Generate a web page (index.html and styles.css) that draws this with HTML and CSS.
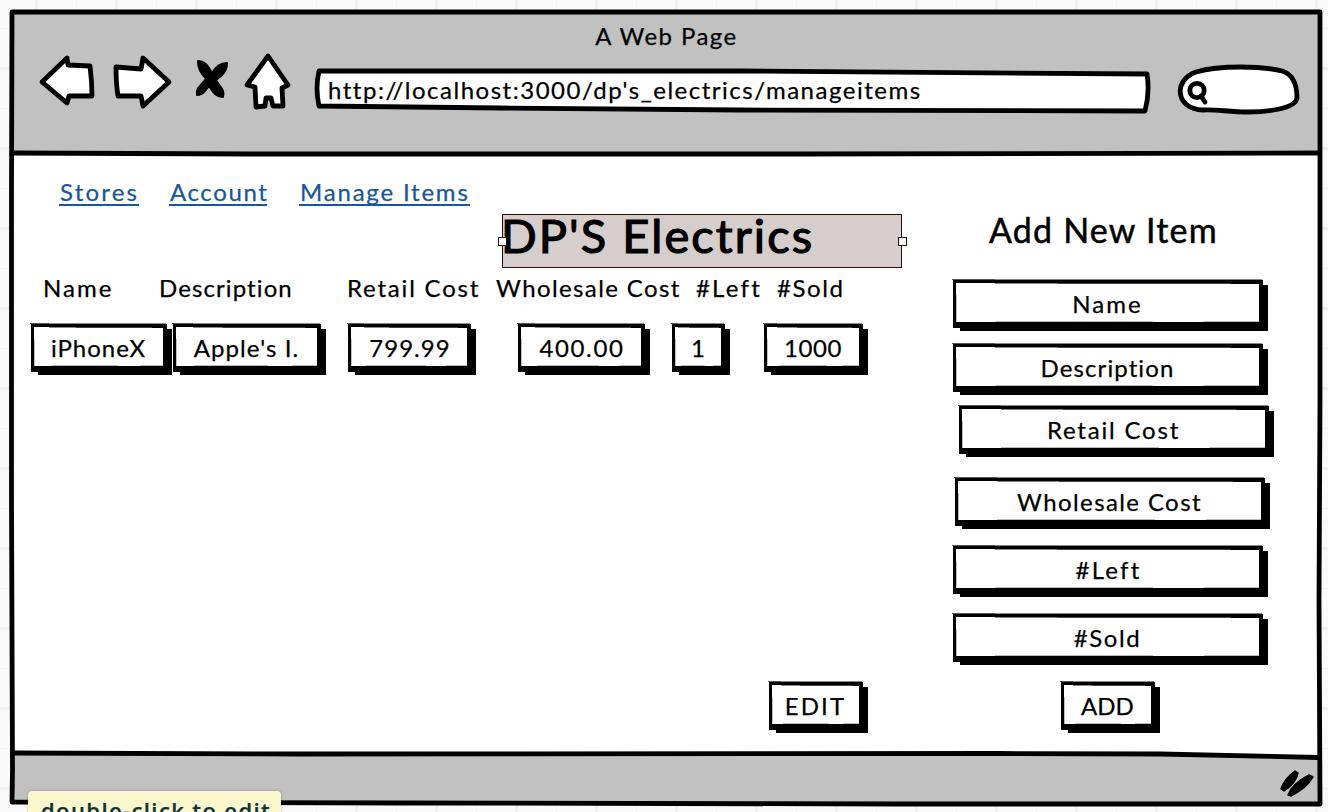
FILE: index.html
```html
<!DOCTYPE html>
<html lang="en">
<head>
<meta charset="utf-8">
<title>A Web Page</title>
<link rel="stylesheet" href="styles.css">
</head>
<body>
<div class="window">
  <header class="chrome">
    <div class="chrome-title"><span class="t-page">A Web Page</span></div>
    <div class="toolbar">
      <svg class="ico back" width="64" height="64" viewBox="36 52 64 64"><path d="M42 82 L67 58 L68 65 L90 66 Q92 82 92 96 L69 96 L67 103 Z"/></svg>
      <svg class="ico forward" width="68" height="64" viewBox="108 52 68 64"><path d="M116 67 L141 69 L143 58 L169 82 L143 106 L141 96 L118 96 Q116 84 116 67 Z"/></svg>
      <svg class="ico stop" width="44" height="64" viewBox="190 52 44 64"><path class="solid" d="M198 61 Q205 61 209 68 L212 73 Q218 63 227 63 Q227 70 222 75 L216 80 L220 86 Q225 92 223 97 Q217 97 213 92 L209 86 L205 91 Q202 95 197 95 Q196 90 200 86 L206 79 L202 74 Q198 68 198 61 Z"/></svg>
      <svg class="ico home" width="52" height="64" viewBox="242 52 52 64"><path d="M268 56 L288 85 L282 88 L283 106 L273 106 L271 98 L266 98 L265 106 L256 107 L255 87 L247 85 Z"/></svg>
      <div class="url">
        <svg class="ico" width="840" height="64" viewBox="312 52 840 64"><path d="M319 71 L740 71 L1147 74 Q1150 92 1145 111 L740 110 L500 108 L319 106 Q315 88 319 71 Z"/></svg>
        <span class="t-url">http://localhost:3000/dp's_electrics/manageitems</span>
      </div>
      <svg class="ico search" width="126" height="64" viewBox="1176 52 126 64"><path d="M1203 110 C1175 109 1173 80 1196 72 C1220 65 1262 66 1282 71 C1296 75 1297 90 1297 98 C1296 108 1270 112 1248 112 C1230 112 1214 109 1203 110 Z"/><circle cx="1197" cy="90.500" r="7.200"/><path d="M1201 96 L1205 102"/></svg>
    </div>
  </header>

  <main class="page">
    <section class="items">
      <nav class="nav">
        <a class="n1">Stores</a><a class="n2">Account</a><a class="n3">Manage Items</a>
      </nav>
      <h1 class="brand"><span>DP'S Electrics</span><i class="handle left"></i><i class="handle right"></i></h1>
      <div class="heads">
        <span class="h1c t-name">Name</span><span class="h2c t-desc">Description</span><span class="h3c t-retail">Retail Cost</span><span class="h4c t-whole">Wholesale Cost</span><span class="h5c t-left">#Left</span><span class="h6c t-sold">#Sold</span>
      </div>
      <div class="cells">
        <div class="box c1"><span class="t-iphone">iPhoneX</span></div>
        <div class="box c2"><span class="t-apple">Apple's I.</span></div>
        <div class="box c3"><span class="t-799">799.99</span></div>
        <div class="box c4"><span class="t-400">400.00</span></div>
        <div class="box c5"><span>1</span></div>
        <div class="box c6"><span class="t-1000">1000</span></div>
      </div>
      <div class="box edit"><span class="t-edit">EDIT</span></div>
    </section>
    <section class="form">
      <h2 class="form-title">Add New Item</h2>
      <div class="box f f1"><span class="t-name">Name</span></div>
      <div class="box f f2"><span class="t-desc">Description</span></div>
      <div class="box f f3"><span class="t-retail">Retail Cost</span></div>
      <div class="box f f4"><span class="t-whole">Wholesale Cost</span></div>
      <div class="box f f5"><span class="t-left">#Left</span></div>
      <div class="box f f6"><span class="t-sold">#Sold</span></div>
      <div class="box add"><span class="t-add">ADD</span></div>
    </section>
  </main>
  <footer class="status"></footer>
</div>

<svg class="frame" width="1328" height="812" viewBox="0 0 1328 812">
  <path class="notch" d="M1040 752 L1318 752 L1318 757 L1160 754 Z"/>
  <path class="line" d="M12 12 L1320 12 L1320 400 L1319 600 L1320 804 L900 804 L400 803 L12 802 L12.500 770 L11.500 500 L11.500 190 Z"/>
  <path class="line" d="M13 153 L250 154 L800 154 L1319 153"/>
  <path class="line" d="M13 753 L300 754 L1000 753.500 L1160 754 L1319 757.500"/>
  <path class="grip" d="M1281 789 Q1284 779 1295 771 L1298 773 Q1296 783 1284 791 Z M1288 795 Q1292 784 1309 775 L1313 777 Q1307 788 1291 796 Z"/>
</svg>
<div class="tooltip"><span>double-click to edit</span></div>
</body>
</html>
```
FILE: styles.css
```css
* { box-sizing: border-box; }
body {
  margin: 0;
  width: 1328px;
  height: 812px;
  overflow: hidden;
  position: relative;
  font-family: Lato, sans-serif;
  font-size: 24px;
  font-variant-ligatures: none;
  -webkit-text-stroke: .25px currentColor;
  line-height: 30px;
  color: #000;
  background-color: #fafafa;
  background-image:
    linear-gradient(90deg, #f0f0f0 3px, transparent 3px),
    linear-gradient(#f0f0f0 3px, transparent 3px),
    linear-gradient(90deg, #f3f3f3 1px, transparent 1px),
    linear-gradient(#f3f3f3 1px, transparent 1px);
  background-size: 80px 80px;
  background-position: 35px 0, 0 67px, 76px 0, 0 28px;
}
span, a, h2 { white-space: nowrap; }

.t-page { letter-spacing: 1.45px; }
.t-url { letter-spacing: 1.51px; }
.t-name { letter-spacing: 2px; }
.t-desc { letter-spacing: 1.1px; }
.t-retail { letter-spacing: 1.8px; }
.t-whole { letter-spacing: 1.4px; }
.t-left { letter-spacing: 2.2px; }
.t-sold { letter-spacing: 1.6px; }
.t-iphone, .t-799 { letter-spacing: 1px; }
.t-apple { letter-spacing: 1.1px; }
.t-400 { letter-spacing: 1.6px; }
.t-1000 { letter-spacing: .6px; }
.t-edit { letter-spacing: 2.1px; }
.t-799, .t-400, .t-left { margin-left: 2px; }

.window {
  display: grid;
  grid-template-rows: 142px 600px 50px;
  width: 1308px;
  padding-top: 12px;
  margin-left: 12px;
}
.chrome, .status { background: #c1c1c1; }
.chrome-title { height: 40px; padding: 9px 0 0 1px; text-align: center; }
.toolbar { display: flex; padding-left: 24px; }
.ico { display: block; flex: none; fill: #fff; stroke: #000; stroke-width: 4.8; stroke-linejoin: round; stroke-linecap: round; }
.ico .solid { fill: #000; stroke: #000; stroke-width: 2; }
.forward { margin-left: 8px; }
.stop { margin-left: 14px; }
.home { margin-left: 8px; }
.url { display: grid; margin-left: 18px; }
.url > * { grid-area: 1 / 1; }
.url span { padding: 23px 0 0 16px; }
.search { margin-left: 24px; }
.search circle { fill: none; }

.page { display: flex; background: #fff; }
.items { width: 938px; }
.nav { display: flex; height: 60px; padding: 24px 0 0 47px; color: #18579b; }
.nav a { height: 28px; line-height: 28px; border-bottom: 2px solid #18579b; padding-left: 1px; }
.n1 { width: 80px; letter-spacing: 2.2px; }
.n2 { width: 98px; margin-left: 30px; letter-spacing: 1.6px; }
.n3 { width: 171px; margin-left: 32px; letter-spacing: 1.8px; }
.brand {
  position: relative;
  width: 400px;
  height: 54px;
  margin: 0 0 0 490px;
  border: 1px solid #2e0f08;
  background: #d6cecc;
  font-size: 47px;
  font-weight: 400;
  line-height: 41px;
  letter-spacing: 2.05px;
  text-indent: -2px;
  -webkit-text-stroke: 1.2px #000;
}
.handle { position: absolute; top: 22px; width: 9px; height: 9px; background: #fff; border: 1px solid #2e0f08; }
.handle.left { left: -5px; }
.handle.right { right: -6px; }
.heads { display: flex; height: 56px; padding: 5px 0 0 31px; }
.heads span { flex: none; margin-left: 0; }
.h1c { width: 116px; }
.h2c { width: 188px; }
.h3c { width: 149px; }
.h4c { width: 200px; }
.h5c { width: 81px; }
.cells { display: flex; padding-left: 19px; }
.box {
  position: relative;
  flex: none;
  height: 48px;
  border: solid #000;
  border-width: 3px 4px 6px 3px;
  background: #fff;
  box-shadow: 6px 4px 0 -1px #000;
  text-align: center;
  line-height: 42px;
}
.box::before {
  content: "";
  position: absolute;
  left: -4px;
  right: -3px;
  top: -4px;
  height: 5px;
  background:
    linear-gradient(90deg, #555 14%, #888 14%) 0 0 / 100% 1px no-repeat,
    linear-gradient(90deg, transparent 14%, #888 14% 34%, #444 34% 90%, #000 90%) 0 100% / 100% 1px no-repeat;
}
.box::after {
  content: "";
  position: absolute;
  inset: 12px 0 0 0;
  background:
    linear-gradient(#c1c1c1, #c1c1c1) 0 0 / 1px 100% no-repeat,
    linear-gradient(90deg, transparent 13%, #bbb 13% 65%, transparent 65% 82%, #bbb 82%) 0 100% / 100% 1px no-repeat;
}
.c1 { width: 136px; }
.c2 { width: 148px; margin-left: 6px; }
.c3 { width: 123px; margin-left: 27px; }
.c4 { width: 127px; margin-left: 47px; }
.c5 { width: 53px; margin-left: 27px; }
.c6 { width: 99px; margin-left: 39px; }
.edit { width: 94px; margin: 310px 0 0 757px; }

.form { padding-top: 56px; }
.form-title { height: 70px; margin: 0 0 0 39px; font-size: 34px; font-weight: 400; line-height: 40px; letter-spacing: 1.2px; -webkit-text-stroke: .5px #000; }
.f { width: 310px; margin-left: 3px; }
.f2 { margin-top: 16px; }
.f3 { margin: 14px 0 0 9px; }
.f4 { margin: 24px 0 0 5px; }
.f5, .f6 { margin-top: 20px; }
.add { width: 94px; margin: 20px 0 0 111px; }

.frame { position: absolute; left: 0; top: 0; }
.frame .line { fill: none; stroke: #000; stroke-width: 4.8; stroke-linejoin: round; }
.frame .notch { fill: #fff; }
.frame .grip { stroke: #000; stroke-width: 1.5; stroke-linejoin: round; }
.tooltip {
  position: absolute;
  left: 28px;
  top: 791px;
  width: 253px;
  height: 40px;
  padding-left: 13px;
  border-radius: 4px;
  background: #fbf8cd;
  box-shadow: 0 0 3px rgba(0, 0, 0, .25);
  color: #10333b;
  font: 600 22px/38px "Open Sans", sans-serif;
  letter-spacing: 1.4px;
}
```
